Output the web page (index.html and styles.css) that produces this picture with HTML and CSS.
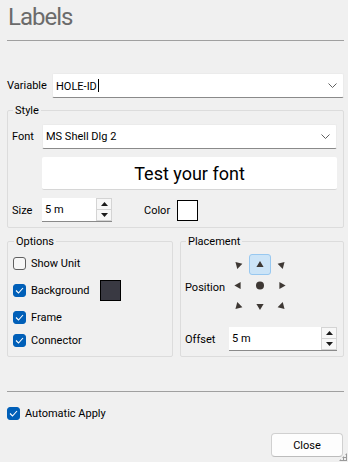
FILE: index.html
```html
<!DOCTYPE html>
<html lang="en">
<head>
    <meta charset="UTF-8">
    <meta name="viewport" content="width=device-width, initial-scale=1.0">
    <title>Labels</title>
    <link rel="stylesheet" href="styles.css">
</head>
<body>
    <div class="dialog">
        <h1 class="title">Labels</h1>
        <hr class="rule">

        <div class="field-row variable-row">
            <span class="label variable-label">Variable</span>
            <div class="combo">
                <span class="combo-text">HOLE-ID<span class="caret"></span></span>
                <svg class="chevron" width="9" height="5" viewBox="0 0 9 5"><path d="M0.5 0.5 L4.5 4.5 L8.5 0.5" fill="none" stroke="#606060" stroke-width="1"/></svg>
            </div>
        </div>

        <fieldset class="group style-group">
            <legend>Style</legend>
            <div class="field-row">
                <span class="label style-label">Font</span>
                <div class="combo">
                    <span class="combo-text">MS Shell Dlg 2</span>
                    <svg class="chevron" width="9" height="5" viewBox="0 0 9 5"><path d="M0.5 0.5 L4.5 4.5 L8.5 0.5" fill="none" stroke="#606060" stroke-width="1"/></svg>
                </div>
            </div>
            <div class="test-font">Test your font</div>
            <div class="field-row size-row">
                <span class="label style-label">Size</span>
                <div class="spin size-spin">
                    <span class="spin-text">5 m</span>
                    <div class="spin-buttons">
                        <span class="spin-btn"><svg width="7" height="4" viewBox="0 0 7 4"><path d="M3.5 0 L7 4 H0 Z" fill="#1a1a1a"/></svg></span>
                        <span class="spin-btn"><svg width="7" height="4" viewBox="0 0 7 4"><path d="M0 0 H7 L3.5 4 Z" fill="#1a1a1a"/></svg></span>
                    </div>
                </div>
                <span class="label color-label">Color</span>
                <span class="swatch swatch-white"></span>
            </div>
        </fieldset>

        <div class="group-row">
            <fieldset class="group options-group">
                <legend>Options</legend>
                <div class="check-row">
                    <span class="checkbox"></span>
                    <span class="check-text">Show Unit</span>
                </div>
                <div class="check-row tall">
                    <span class="checkbox checked"><svg width="9" height="7" viewBox="0 0 9 7"><path d="M1 3.5 L3.5 6 L8 1" fill="none" stroke="#fff" stroke-width="1.1"/></svg></span>
                    <span class="check-text wide">Background</span>
                    <span class="swatch swatch-dark"></span>
                </div>
                <div class="check-row">
                    <span class="checkbox checked"><svg width="9" height="7" viewBox="0 0 9 7"><path d="M1 3.5 L3.5 6 L8 1" fill="none" stroke="#fff" stroke-width="1.1"/></svg></span>
                    <span class="check-text">Frame</span>
                </div>
                <div class="check-row">
                    <span class="checkbox checked"><svg width="9" height="7" viewBox="0 0 9 7"><path d="M1 3.5 L3.5 6 L8 1" fill="none" stroke="#fff" stroke-width="1.1"/></svg></span>
                    <span class="check-text">Connector</span>
                </div>
            </fieldset>

            <fieldset class="group placement-group">
                <legend>Placement</legend>
                <div class="field-row position-row">
                    <span class="label position-label">Position</span>
                    <div class="pos-grid">
                        <span class="pos-cell"><svg width="22" height="21" viewBox="0 0 22 21"><path d="M0 -3.6 L3.6 2.6 H-3.6 Z" fill="#3e3834" transform="translate(11 10.5) rotate(-45)"/></svg></span>
                        <span class="pos-cell selected"><svg width="22" height="21" viewBox="0 0 22 21"><path d="M0 -3.6 L3.6 2.6 H-3.6 Z" fill="#3e3834" transform="translate(11 10.5)"/></svg></span>
                        <span class="pos-cell"><svg width="22" height="21" viewBox="0 0 22 21"><path d="M0 -3.6 L3.6 2.6 H-3.6 Z" fill="#3e3834" transform="translate(11 10.5) rotate(45)"/></svg></span>
                        <span class="pos-cell"><svg width="22" height="21" viewBox="0 0 22 21"><path d="M0 -3.6 L3.6 2.6 H-3.6 Z" fill="#3e3834" transform="translate(11 10.5) rotate(-90)"/></svg></span>
                        <span class="pos-cell"><svg width="22" height="21" viewBox="0 0 22 21"><circle cx="11" cy="10.5" r="4" fill="#3e3834"/></svg></span>
                        <span class="pos-cell"><svg width="22" height="21" viewBox="0 0 22 21"><path d="M0 -3.6 L3.6 2.6 H-3.6 Z" fill="#3e3834" transform="translate(11 10.5) rotate(90)"/></svg></span>
                        <span class="pos-cell"><svg width="22" height="21" viewBox="0 0 22 21"><path d="M0 -3.6 L3.6 2.6 H-3.6 Z" fill="#3e3834" transform="translate(11 10.5) rotate(-135)"/></svg></span>
                        <span class="pos-cell"><svg width="22" height="21" viewBox="0 0 22 21"><path d="M0 -3.6 L3.6 2.6 H-3.6 Z" fill="#3e3834" transform="translate(11 10.5) rotate(180)"/></svg></span>
                        <span class="pos-cell"><svg width="22" height="21" viewBox="0 0 22 21"><path d="M0 -3.6 L3.6 2.6 H-3.6 Z" fill="#3e3834" transform="translate(11 10.5) rotate(135)"/></svg></span>
                    </div>
                </div>
                <div class="field-row offset-row">
                    <span class="label offset-label">Offset</span>
                    <div class="spin offset-spin">
                        <span class="spin-text">5 m</span>
                        <div class="spin-buttons">
                            <span class="spin-btn"><svg width="7" height="4" viewBox="0 0 7 4"><path d="M3.5 0 L7 4 H0 Z" fill="#1a1a1a"/></svg></span>
                            <span class="spin-btn"><svg width="7" height="4" viewBox="0 0 7 4"><path d="M0 0 H7 L3.5 4 Z" fill="#1a1a1a"/></svg></span>
                        </div>
                    </div>
                </div>
            </fieldset>
        </div>

        <hr class="rule bottom-rule">

        <div class="check-row apply-row">
            <span class="checkbox checked"><svg width="9" height="7" viewBox="0 0 9 7"><path d="M1 3.5 L3.5 6 L8 1" fill="none" stroke="#fff" stroke-width="1.1"/></svg></span>
            <span class="check-text">Automatic Apply</span>
        </div>

        <div class="footer">
            <button class="close-btn">Close</button>
        </div>
    </div>
    <div class="size-grip"></div>
</body>
</html>
```

FILE: styles.css
```css
/* Dialog base */
body {
    margin: 0;
    background: #f0f0f0;
    font-family: Roboto, "Liberation Sans", sans-serif;
    font-size: 11px;
    color: #000;
    overflow: hidden;
}
.dialog {
    padding: 0 4px 0 7px;
}
.title {
    margin: 0;
    padding: 2px 0 0 1px;
    font-size: 24px;
    font-weight: 400;
    line-height: 30px;
    letter-spacing: -1px;
    color: #6b6b6b;
}
.rule {
    margin: 8px 0 0;
    height: 0;
    border: 0;
    border-top: 1px solid #a0a0a0;
}
.field-row {
    display: flex;
    align-items: center;
}
.label {
    flex: none;
}
.variable-row {
    margin-top: 32px;
}
.variable-label {
    width: 45px;
}

/* Combo boxes */
.combo {
    flex: 1;
    height: 25px;
    box-sizing: border-box;
    display: flex;
    align-items: center;
    justify-content: space-between;
    padding: 0 6px 0 3px;
    background: #fff;
    border: 1px solid #ebebeb;
    border-bottom-color: #8a8a8a;
    border-radius: 2px;
}
.caret {
    display: inline-block;
    width: 1px;
    height: 13px;
    margin-left: 1px;
    vertical-align: -2px;
    background: #000;
}

/* Group boxes */
.group {
    margin: 0;
    min-width: 0;
    border: 1px solid #dcdcdc;
    border-radius: 2px;
}
.group legend {
    margin-left: 1px;
    padding: 0 2px;
    line-height: 13px;
}
.style-group {
    margin-top: 6px;
    padding: 7px 6px 5px 4px;
}
.style-label {
    width: 30px;
}
.test-font {
    margin: 8px 0 0 30px;
    height: 33px;
    box-sizing: border-box;
    background: #fff;
    border-bottom: 1px solid #d6d6d6;
    border-radius: 2px;
    text-align: center;
    font-size: 18px;
    line-height: 33px;
}
.size-row {
    margin-top: 8px;
}
.color-label {
    margin-left: 32px;
    width: 33px;
}
.swatch {
    display: inline-block;
    width: 21px;
    height: 21px;
    box-sizing: border-box;
    border: 1px solid #000;
}
.swatch-white {
    background: #fff;
}
.swatch-dark {
    background: #393942;
}

/* Spin boxes */
.spin {
    display: flex;
    height: 24px;
    box-sizing: border-box;
    background: #fff;
    border-bottom: 1px solid #8a8a8a;
}
.size-spin {
    width: 70px;
}
.offset-spin {
    flex: 1;
}
.spin-text {
    flex: 1;
    padding-left: 3px;
    line-height: 23px;
}
.spin-buttons {
    display: flex;
    flex-direction: column;
    width: 16px;
    margin-left: 1px;
    border: 1px solid #d4d4d4;
    box-sizing: border-box;
    background: #f7f7f7;
}
.spin-btn {
    flex: 1;
    display: flex;
    align-items: center;
    justify-content: center;
}
.spin-btn + .spin-btn {
    border-top: 1px solid #d4d4d4;
}

/* Options and placement */
.group-row {
    display: flex;
    gap: 7px;
    margin-top: 7px;
}
.options-group {
    width: 166px;
    box-sizing: border-box;
    padding: 4px 4px 4px 5px;
}
.placement-group {
    flex: 1;
    padding: 6px 6px 4px 4px;
}
.check-row {
    display: flex;
    align-items: center;
    height: 23px;
}
.check-row.tall {
    height: 31px;
}
.checkbox {
    flex: none;
    width: 13px;
    height: 13px;
    box-sizing: border-box;
    display: flex;
    align-items: center;
    justify-content: center;
    border: 1px solid #606060;
    border-radius: 3px;
    background: #f7f7f7;
}
.checkbox.checked {
    border-color: #005fb8;
    background: #005fb8;
}
.check-text {
    margin-left: 5px;
}
.check-text.wide {
    width: 69px;
}
.position-label {
    width: 42px;
    padding-top: 4px;
}
.pos-grid {
    display: grid;
    grid-template-columns: repeat(3, 22px);
    grid-template-rows: repeat(3, 21px);
}
.pos-cell {
    display: flex;
    box-sizing: border-box;
    border: 1px solid transparent;
    border-radius: 3px;
}
.pos-cell svg {
    margin: -1px;
}
.pos-cell.selected {
    background: #cce4f7;
    border-color: #98c8f0;
}
.offset-row {
    margin-top: 10px;
}
.offset-label {
    width: 44px;
}

/* Footer */
.bottom-rule {
    margin-top: 34px;
}
.apply-row {
    margin-top: 10px;
}
.footer {
    display: flex;
    justify-content: flex-end;
    margin-top: 8px;
}
.close-btn {
    width: 72px;
    height: 24px;
    margin-right: 1px;
    padding: 0;
    font-family: inherit;
    font-size: 11px;
    color: #000;
    background: #fdfdfd;
    border: 1px solid #d0d0d0;
    border-bottom-color: #bcbcbc;
    border-radius: 4px;
}
.size-grip {
    position: absolute;
    right: 1px;
    bottom: 1px;
    width: 8px;
    height: 8px;
    background: radial-gradient(circle, #9a9a9a 1px, transparent 1.2px) 0 0 / 3px 3px;
    clip-path: polygon(100% 0, 100% 100%, 0 100%);
}
```
